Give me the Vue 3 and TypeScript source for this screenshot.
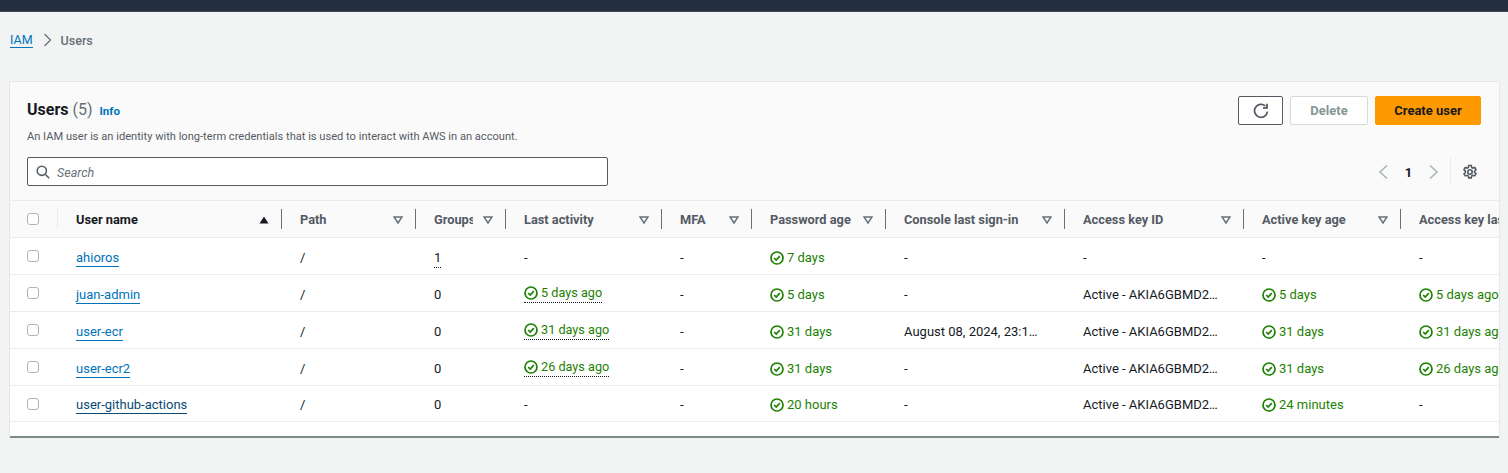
<script setup lang="ts">
interface Cell {
  text: string
  ok?: boolean
  dotted?: boolean
}

interface UserRow {
  name: string
  hover?: boolean
  groups: string
  activity: Cell
  password: Cell
  signin: string
  key: string
  keyAge: Cell
  keyLast: Cell
}

const columns = [
  { label: 'User name', sorted: true },
  { label: 'Path' },
  { label: 'Groups' },
  { label: 'Last activity' },
  { label: 'MFA' },
  { label: 'Password age' },
  { label: 'Console last sign-in' },
  { label: 'Access key ID' },
  { label: 'Active key age' },
  { label: 'Access key last used' },
]

const keyId = 'Active - AKIA6GBMD2XQ7LNRTUVW'
const none: Cell = { text: '-' }
const good = (text: string): Cell => ({ text, ok: true })
const ago = (text: string): Cell => ({ text, ok: true, dotted: true })

const users: UserRow[] = [
  { name: 'ahioros', groups: '1', activity: none, password: good('7 days'), signin: '-', key: '-', keyAge: none, keyLast: none },
  { name: 'juan-admin', groups: '0', activity: ago('5 days ago'), password: good('5 days'), signin: '-', key: keyId, keyAge: good('5 days'), keyLast: good('5 days ago') },
  { name: 'user-ecr', groups: '0', activity: ago('31 days ago'), password: good('31 days'), signin: 'August 08, 2024, 23:14 (UTC-06:00)', key: keyId, keyAge: good('31 days'), keyLast: good('31 days ago') },
  { name: 'user-ecr2', groups: '0', activity: ago('26 days ago'), password: good('31 days'), signin: '-', key: keyId, keyAge: good('31 days'), keyLast: good('26 days ago') },
  { name: 'user-github-actions', hover: true, groups: '0', activity: none, password: good('20 hours'), signin: '-', key: keyId, keyAge: good('24 minutes'), keyLast: none },
]

const cellsOf = (u: UserRow): Cell[] => [u.activity, { text: '-' }, u.password]
</script>

<template>
  <div class="topbar"></div>
  <main class="page">
    <nav class="crumbs">
      <a class="crumb-link">IAM</a>
      <svg class="crumb-arrow" width="12" height="14" viewBox="0 0 12 14"><path d="M2.5 1 8.500 7l-6 6" /></svg>
      <span class="crumb-current">Users</span>
    </nav>

    <section class="card">
      <header class="card-head">
        <div class="head-top">
          <div>
            <h1 class="title">Users <span class="count">(5)</span> <a class="info">Info</a></h1>
            <p class="desc">An IAM user is an identity with long-term credentials that is used to interact with AWS in an account.</p>
          </div>
          <div class="actions">
            <button class="btn btn-icon">
              <svg width="16" height="16" viewBox="0 0 16 16"><path d="M14.500 8.500A6.500 6.500 0 1 1 12.300 2.900" /><path d="M14 .8v4h-4" /></svg>
            </button>
            <button class="btn btn-off">Delete</button>
            <button class="btn btn-primary">Create user</button>
          </div>
        </div>
        <div class="head-bottom">
          <div class="search">
            <svg width="14" height="14" viewBox="0 0 14 14"><circle cx="5.800" cy="5.800" r="4.600" /><path d="m9.200 9.200 4 4" /></svg>
            <span class="search-text">Search</span>
          </div>
          <div class="pager">
            <svg class="pg-arrow" width="10" height="14" viewBox="0 0 10 14"><path d="M9 .5 2 7l7 6.500" /></svg>
            <span class="pg-num">1</span>
            <svg class="pg-arrow" width="10" height="14" viewBox="0 0 10 14"><path d="m1 .5 7 6.500-7 6.500" /></svg>
            <span class="pg-sep"></span>
            <svg class="gear" width="16" height="16" viewBox="0 0 16 16"><path d="M6.700 1.500h2.600l.4 1.900 1.200.7 1.800-.6 1.300 2.200-1.400 1.300v1.400l1.400 1.300-1.300 2.200-1.800-.6-1.200.7-.4 1.900H6.700l-.4-1.900-1.200-.7-1.800.6L2 9.800l1.400-1.300V7.100L2 5.700l1.300-2.200 1.800.6 1.200-.7z" /><circle cx="8" cy="8" r="2.200" /></svg>
          </div>
        </div>
      </header>

      <table class="users">
        <colgroup>
          <col class="c-check" /><col class="c-name" /><col class="c-path" /><col class="c-groups" /><col class="c-activity" />
          <col class="c-mfa" /><col class="c-pass" /><col class="c-console" /><col class="c-key" /><col class="c-age" /><col class="c-last" />
        </colgroup>
        <thead>
          <tr>
            <th class="check-cell"><span class="box"></span><span class="th-sep light"></span></th>
            <th v-for="col in columns" :key="col.label" :class="{ sorted: col.sorted }">
              <span class="th-label">{{ col.label }}</span>
              <svg v-if="col.sorted" class="sort" width="10" height="8" viewBox="0 0 10 8"><path class="solid" d="M5 .5 9.500 7.500H.5z" /></svg>
              <svg v-else class="sort" width="10" height="8" viewBox="0 0 10 8"><path d="M1 1h8L5 7z" /></svg>
              <span class="th-sep"></span>
            </th>
          </tr>
        </thead>
        <tbody>
          <tr v-for="u in users" :key="u.name">
            <td class="check-cell"><span class="box"></span></td>
            <td><a class="user-link" :class="{ hover: u.hover }">{{ u.name }}</a></td>
            <td>/</td>
            <td><span :class="{ 'dot-line': u.groups === '1' }">{{ u.groups }}</span></td>
            <td v-for="(c, i) in cellsOf(u)" :key="i">
              <span v-if="c.ok" class="ok" :class="{ 'dot-line': c.dotted, raised: c.dotted }">
                <svg width="14" height="14" viewBox="0 0 14 14"><circle cx="7" cy="7" r="6" /><path d="m4.200 7 2 2 3.600-3.800" /></svg>{{ c.text }}
              </span>
              <template v-else>{{ c.text }}</template>
            </td>
            <td>{{ u.signin }}</td>
            <td>{{ u.key }}</td>
            <td>
              <span v-if="u.keyAge.ok" class="ok"><svg width="14" height="14" viewBox="0 0 14 14"><circle cx="7" cy="7" r="6" /><path d="m4.200 7 2 2 3.600-3.800" /></svg>{{ u.keyAge.text }}</span>
              <template v-else>-</template>
            </td>
            <td>
              <span v-if="u.keyLast.ok" class="ok"><svg width="14" height="14" viewBox="0 0 14 14"><circle cx="7" cy="7" r="6" /><path d="m4.200 7 2 2 3.600-3.800" /></svg>{{ u.keyLast.text }}</span>
              <template v-else>-</template>
            </td>
          </tr>
        </tbody>
      </table>
      <div class="card-foot"></div>
    </section>
  </main>
</template>

<style scoped>
.topbar {
  height: 11px;
  background: #232f3e;
  border-bottom: 1px solid #3b4654;
}

.page {
  padding: 0 9px 0 10px;
}

.crumbs {
  display: flex;
  align-items: center;
  height: 20px;
  margin-top: 18px;
  font-size: 12.5px;
}

.crumb-link {
  color: #0073bb;
  border-bottom: 1px solid #0073bb;
  line-height: 15px;
}

.crumb-arrow {
  margin: 0 7px 0 9px;
}

.crumb-arrow path {
  fill: none;
  stroke: #687078;
  stroke-width: 1.3;
}

.crumb-current {
  color: #687078;
  font-weight: 500;
}

.card {
  margin-top: 32px;
  background: #fff;
  overflow: hidden;
  box-shadow: 0 0 0 1px #e6e8e8;
}

.card-head {
  background: #fafafa;
  padding: 14px 18px 14px 17px;
  height: 119px;
  box-sizing: border-box;
  border-bottom: 1px solid #eaeded;
}

.head-top {
  display: flex;
  justify-content: space-between;
  height: 61px;
}

.title {
  margin: 3px 0 0;
  font-size: 16px;
  line-height: 22px;
  font-weight: 700;
  color: #16191f;
}

.count {
  font-weight: 400;
  color: #687078;
}

.info {
  margin-left: 3px;
  font-size: 11.5px;
  color: #0073bb;
}

.desc {
  margin: 8px 0 0;
  font-size: 11.1px;
  line-height: 14px;
  color: #545b64;
}

.actions {
  display: flex;
  gap: 7px;
  align-items: flex-start;
}

.btn {
  height: 29px;
  box-sizing: border-box;
  border-radius: 2px;
  font: inherit;
  font-size: 13px;
  font-weight: 700;
  padding: 0;
}

.btn-icon {
  width: 45px;
  background: #fff;
  border: 1px solid #545b64;
  display: flex;
  align-items: center;
  justify-content: center;
}

.btn-icon path {
  fill: none;
  stroke: #545b64;
  stroke-width: 1.8;
}

.btn-off {
  width: 78px;
  background: #fff;
  border: 1px solid #d5dbdb;
  color: #879596;
}

.btn-primary {
  width: 106px;
  background: #ff9900;
  border: 1px solid #ff9900;
  color: #16191f;
}

.head-bottom {
  display: flex;
  justify-content: space-between;
  align-items: center;
  height: 29px;
}

.search {
  width: 581px;
  height: 29px;
  box-sizing: border-box;
  background: #fff;
  border: 1px solid #545b64;
  border-radius: 2px;
  display: flex;
  align-items: center;
  gap: 7px;
  padding-left: 8px;
  font-size: 12.5px;
  font-style: italic;
  color: #687078;
}

.search-text {
  padding-top: 2px;
}

.search svg {
  fill: none;
  stroke: #545b64;
  stroke-width: 1.6;
}

.pager {
  display: flex;
  align-items: center;
  margin-right: 3px;
}

.pg-arrow {
  fill: none;
  stroke: #aab7b8;
  stroke-width: 1.6;
}

.pg-num {
  width: 41px;
  box-sizing: border-box;
  padding-top: 2px;
  text-align: center;
  font-size: 13px;
  font-weight: 700;
  color: #16191f;
}

.pg-sep {
  width: 1px;
  height: 29px;
  background: #eaeded;
  margin: 0 11px;
}

.gear {
  fill: none;
  stroke: #545b64;
  stroke-width: 1.6;
}

.users {
  table-layout: fixed;
  border-collapse: separate;
  border-spacing: 0;
  width: 1651px;
  font-size: 13px;
  color: #16191f;
}

.c-check { width: 48px; }
.c-name { width: 224px; }
.c-path { width: 134px; }
.c-groups { width: 90px; }
.c-activity { width: 156px; }
.c-mfa { width: 90px; }
.c-pass { width: 134px; }
.c-console { width: 179px; }
.c-key { width: 179px; }
.c-age { width: 157px; }
.c-last { width: 260px; }

th {
  position: relative;
  height: 36px;
  background: #fafafa;
  border-bottom: 1px solid #eaeded;
  padding: 0 33px 0 18px;
  text-align: left;
  font-size: 12.8px;
  font-weight: 700;
  color: #545b64;
  white-space: nowrap;
}

th.sorted {
  color: #16191f;
}

.th-label {
  display: block;
  overflow: hidden;
}

.sort {
  position: absolute;
  right: 13px;
  top: 15px;
  fill: none;
  stroke: #687078;
  stroke-width: 1.5;
}

.sort .solid {
  fill: #16191f;
  stroke: none;
}

.th-sep {
  position: absolute;
  right: 0;
  top: 8px;
  width: 1px;
  height: 20px;
  background: #687078;
}

.th-sep.light {
  background: #eaeded;
}

td {
  height: 34px;
  padding: 2px 22px 0 18px;
  border-bottom: 1px solid #eaeded;
  white-space: nowrap;
  overflow: hidden;
  text-overflow: ellipsis;
}

tr:last-child td {
  height: 34px;
  padding-top: 1px;
}

th.check-cell,
td.check-cell {
  padding: 0 0 0 17px;
}

.box {
  display: block;
  width: 12px;
  height: 12px;
  background: #fff;
  border: 1.5px solid #aab7b8;
  border-radius: 3px;
  box-sizing: border-box;
}

.user-link {
  color: #0073bb;
  border-bottom: 1px solid #0073bb;
  padding-bottom: 1px;
}

.user-link.hover {
  color: #0a4a74;
  border-color: #0a4a74;
}

.ok {
  display: inline-flex;
  align-items: center;
  gap: 3px;
  color: #1d8102;
  vertical-align: middle;
}

.ok svg {
  fill: none;
  stroke: #1d8102;
  stroke-width: 1.7;
}

.dot-line {
  border-bottom: 1px dotted #16191f;
  padding-bottom: 2px;
}

.raised {
  font-size: 12.7px;
}

.card-foot {
  height: 14px;
  border-bottom: 2px solid #7d8a8c;
}
</style>

<style>
body {
  background: #f2f3f3;
  font-family: "Roboto", "Liberation Sans", sans-serif;
  overflow: hidden;
}
</style>
